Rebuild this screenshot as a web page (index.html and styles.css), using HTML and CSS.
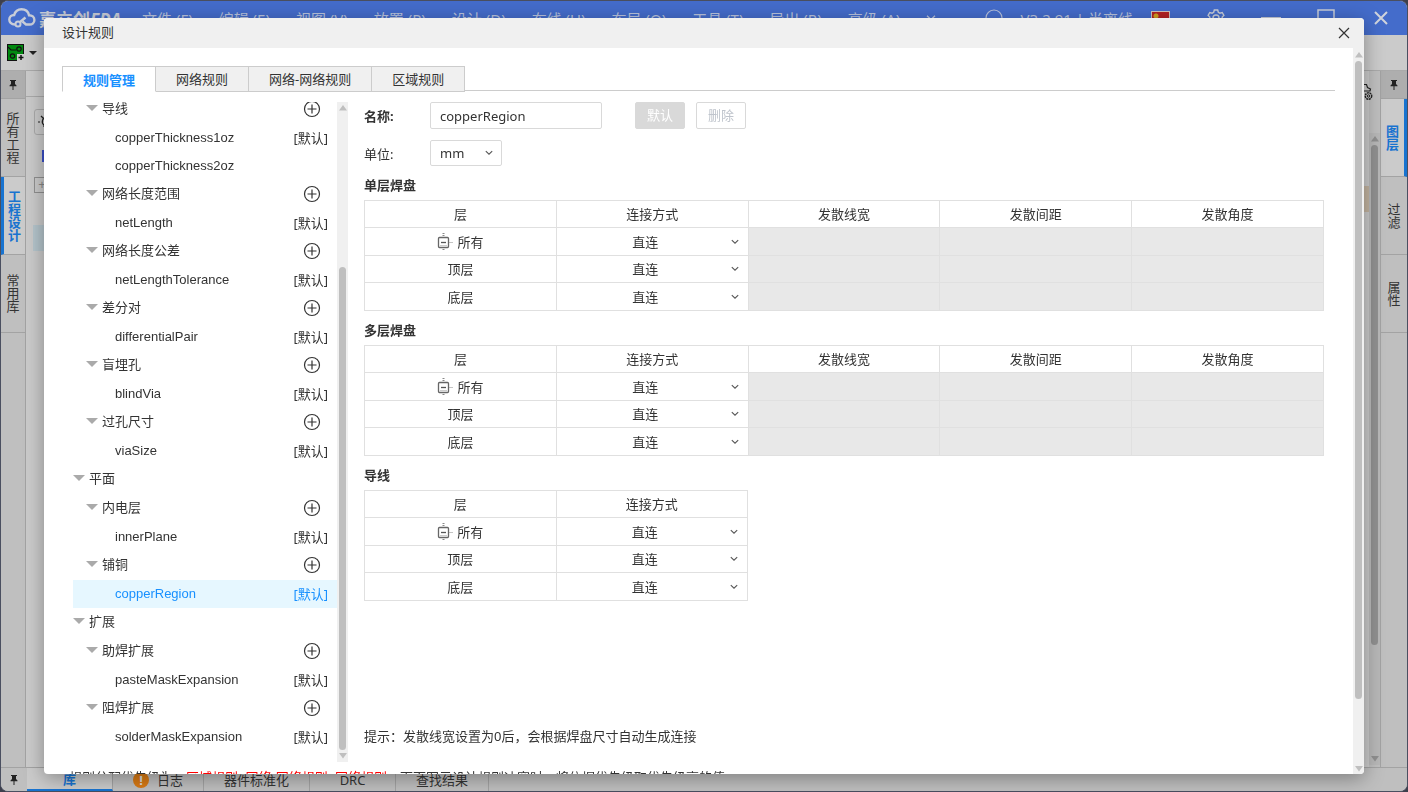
FILE: index.html
```html
<!DOCTYPE html>
<html lang="zh-CN">
<head>
  <meta charset="UTF-8">
  <meta name="viewport" content="width=device-width, initial-scale=1.0">
  <title>设计规则</title>
  <link rel="stylesheet" href="styles.css">
</head>
<body>
  <!-- shared icons -->
  <svg class="icon-defs" aria-hidden="true">
    <symbol id="chevron" viewBox="0 0 8 8">
      <path d="M0.8 2.200 L4 5.200 L7.200 2.200" fill="none" stroke="currentColor" stroke-width="1.100"/>
    </symbol>
    <symbol id="pin" viewBox="0 0 8 10">
      <path d="M1 0h6v1h-1v3l1.500 1.500v.8H4.500V10h-1V6.300H.5v-.8L2 4V1H1z" fill="#222"/>
    </symbol>
    <symbol id="plus" viewBox="0 0 18 18">
      <circle cx="9" cy="9" r="7.500" fill="none" stroke="#333" stroke-width="1.200"/>
      <path d="M4.500 9h9M9 4.500v9" stroke="#333" stroke-width="1.200"/>
    </symbol>
    <symbol id="expand" viewBox="0 0 16 18">
      <rect x="1.500" y="4.500" width="10" height="10" rx="1" fill="none" stroke="#666" stroke-width="1.300"/>
      <path d="M4 9.500h5" stroke="#555" stroke-width="1.300"/>
      <path d="M3 12.500h7" stroke="#ccc"/>
      <path d="M5.500 .5h2M5.500 2.500h2M5.500 16.500h2M12.500 9.500h1M14.500 9.500h1" stroke="#888"/>
    </symbol>
  </svg>

  <div class="app">
    <header class="titlebar">
      <svg class="logo" viewBox="0 0 28 20">
        <path d="M7 16.500C3 16.500 1.300 14 1.300 11.600 1.300 8.800 3.600 7 6.200 7 7.200 3.500 10 1.300 13.500 1.300c4 0 6.800 2.500 7.500 6 3 0 5.400 1.800 5.400 4.600 0 2.800-2.200 4.600-4.900 4.600h-3.500l-3.500-3" fill="none" stroke="#c8cdd8" stroke-width="2.400"/>
        <path d="M11.500 14.500l6-5" stroke="#c8cdd8" stroke-width="2.400"/>
        <circle cx="10" cy="16" r="2.500" fill="none" stroke="#c8cdd8" stroke-width="2"/>
      </svg>
      <strong class="brand">嘉立创<i>EDA</i></strong>
      <nav class="menu">
        <a href="#">文件 (F)</a>
        <a href="#">编辑 (E)</a>
        <a href="#">视图 (V)</a>
        <a href="#">放置 (P)</a>
        <a href="#">设计 (D)</a>
        <a href="#">布线 (U)</a>
        <a href="#">布局 (O)</a>
        <a href="#">工具 (T)</a>
        <a href="#">导出 (R)</a>
        <a href="#">高级 (A)</a>
        <svg width="10" height="10"><use href="#chevron"/></svg>
      </nav>
      <svg class="ring" viewBox="0 0 18 18"><circle cx="9" cy="9" r="8" fill="none" stroke="#b9c3dd" stroke-width="1.200"/></svg>
      <span class="version">V3.2.91 | 半离线</span>
      <span class="flag"></span>
      <svg class="gear" viewBox="0 0 18 18">
        <path d="M7.300 1h3.400l.6 2.300 1.600.9 2.300-.7 1.700 2.900-1.700 1.700v1.800l1.700 1.700-1.700 2.900-2.300-.7-1.600.9-.6 2.300H7.300l-.6-2.300-1.600-.9-2.300.7-1.700-2.900 1.700-1.700V8.100L1.100 6.400l1.700-2.900 2.300.7 1.600-.9z" fill="none" stroke="#c8cdd8" stroke-width="1.400"/>
        <circle cx="9" cy="9" r="3" fill="none" stroke="#c8cdd8" stroke-width="1.400"/>
      </svg>
      <button class="win-btn" aria-label="最小化"><svg viewBox="0 0 20 20"><path d="M0 10h20" stroke="#c8cdd8" stroke-width="2"/></svg></button>
      <button class="win-btn" aria-label="最大化"><svg viewBox="0 0 20 20"><rect x="2" y="2" width="16" height="16" fill="none" stroke="#c8cdd8" stroke-width="1.500"/></svg></button>
      <button class="win-btn" aria-label="关闭窗口"><svg viewBox="0 0 20 20"><path d="M4 4l12 12M16 4L4 16" stroke="#d0d4dc" stroke-width="2"/></svg></button>
    </header>

    <div class="toolbar">
      <svg width="18" height="18" viewBox="0 0 18 18">
        <rect x=".5" y=".5" width="16" height="16" fill="#008a10" stroke="#111"/>
        <path d="M1 3l3 3h5" fill="none" stroke="#111" stroke-width="1.200"/>
        <circle cx="12" cy="5" r="2.200" fill="none" stroke="#111" stroke-width="1.200"/>
        <circle cx="5.500" cy="12" r="2.200" fill="none" stroke="#111" stroke-width="1.200"/>
        <path d="M10 10h8v8h-8z" fill="#cbcbcb"/>
        <path d="M11.500 13.500h5M14 11v5" stroke="#111" stroke-width="1.500"/>
      </svg>
      <svg width="8" height="4" viewBox="0 0 8 4"><path d="M0 0h8L4 4z" fill="#222"/></svg>
    </div>

    <div class="workspace">
      <aside class="side side-left">
        <div class="side-pin"><svg width="8" height="10"><use href="#pin"/></svg></div>
        <a class="side-tab" href="#">所有工程</a>
        <a class="side-tab active" href="#">工程设计</a>
        <a class="side-tab" href="#">常用库</a>
      </aside>
      <div class="panel">
        <div class="panel-head"></div>
        <div class="panel-tool">
          <svg width="18" height="18" viewBox="0 0 18 18"><path d="M9 4a4.500 4.500 0 0 0-3 8v2M0 9h2M3 3l2 2" fill="none" stroke="#222" stroke-width="1.200"/></svg>
        </div>
        <div class="panel-mark"></div>
        <div class="panel-node">+</div>
        <div class="panel-row"></div>
      </div>
      <div class="canvas"></div>
      <div class="layers">
        <svg class="cloud-gear" viewBox="0 0 12 18">
          <path d="M0 1.500h2.500l1 3 3 1.500-.5 2H0" fill="none" stroke="#222" stroke-width="1.200"/>
          <circle cx="4.500" cy="13" r="3.200" fill="none" stroke="#222" stroke-width="1.400" stroke-dasharray="2 .6"/>
          <circle cx="4.500" cy="13" r="1.200" fill="none" stroke="#222"/>
        </svg>
        <div class="layer-row"></div>
      </div>
      <div class="scroll scroll-dim">
        <svg viewBox="0 0 8 6"><path d="M4 0l4 5.500H0z"/></svg>
        <i></i>
        <svg viewBox="0 0 8 6"><path d="M0 0h8L4 5.500z"/></svg>
      </div>
      <aside class="side side-right">
        <div class="side-pin"><svg width="8" height="10"><use href="#pin"/></svg></div>
        <a class="side-tab active" href="#">图层</a>
        <a class="side-tab" href="#">过滤</a>
        <a class="side-tab" href="#">属性</a>
      </aside>
    </div>

    <footer class="bottombar">
      <span class="bottom-pin"><svg width="8" height="10"><use href="#pin"/></svg></span>
      <a class="bottom-tab active" href="#">库</a>
      <a class="bottom-tab" href="#"><b class="warn">!</b>日志</a>
      <a class="bottom-tab" href="#">器件标准化</a>
      <a class="bottom-tab" href="#">DRC</a>
      <a class="bottom-tab" href="#">查找结果</a>
    </footer>
  </div>

  <section class="dialog" role="dialog" aria-labelledby="dialogTitle">
    <header class="dialog-head">
      <h1 id="dialogTitle">设计规则</h1>
      <button class="close" aria-label="关闭"><svg width="12" height="12" viewBox="0 0 12 12"><path d="M1 1l10 10M11 1L1 11" stroke="#333" stroke-width="1.200"/></svg></button>
    </header>

    <div class="dialog-main">
      <div class="dialog-body">
        <nav class="tabs">
          <button class="tab active">规则管理</button>
          <button class="tab">网络规则</button>
          <button class="tab">网络-网络规则</button>
          <button class="tab">区域规则</button>
        </nav>

        <div class="columns">
          <div class="tree-wrap">
            <ul class="tree">
              <li class="group"><span>导线</span><button aria-label="新增导线"><svg><use href="#plus"/></svg></button></li>
              <li class="leaf"><a href="#">copperThickness1oz</a><em>[默认]</em></li>
              <li class="leaf"><a href="#">copperThickness2oz</a></li>
              <li class="group"><span>网络长度范围</span><button aria-label="新增网络长度范围"><svg><use href="#plus"/></svg></button></li>
              <li class="leaf"><a href="#">netLength</a><em>[默认]</em></li>
              <li class="group"><span>网络长度公差</span><button aria-label="新增网络长度公差"><svg><use href="#plus"/></svg></button></li>
              <li class="leaf"><a href="#">netLengthTolerance</a><em>[默认]</em></li>
              <li class="group"><span>差分对</span><button aria-label="新增差分对"><svg><use href="#plus"/></svg></button></li>
              <li class="leaf"><a href="#">differentialPair</a><em>[默认]</em></li>
              <li class="group"><span>盲埋孔</span><button aria-label="新增盲埋孔"><svg><use href="#plus"/></svg></button></li>
              <li class="leaf"><a href="#">blindVia</a><em>[默认]</em></li>
              <li class="group"><span>过孔尺寸</span><button aria-label="新增过孔尺寸"><svg><use href="#plus"/></svg></button></li>
              <li class="leaf"><a href="#">viaSize</a><em>[默认]</em></li>
              <li class="group root"><span>平面</span></li>
              <li class="group"><span>内电层</span><button aria-label="新增内电层"><svg><use href="#plus"/></svg></button></li>
              <li class="leaf"><a href="#">innerPlane</a><em>[默认]</em></li>
              <li class="group"><span>铺铜</span><button aria-label="新增铺铜"><svg><use href="#plus"/></svg></button></li>
              <li class="leaf selected"><a href="#">copperRegion</a><em>[默认]</em></li>
              <li class="group root"><span>扩展</span></li>
              <li class="group"><span>助焊扩展</span><button aria-label="新增助焊扩展"><svg><use href="#plus"/></svg></button></li>
              <li class="leaf"><a href="#">pasteMaskExpansion</a><em>[默认]</em></li>
              <li class="group"><span>阻焊扩展</span><button aria-label="新增阻焊扩展"><svg><use href="#plus"/></svg></button></li>
              <li class="leaf"><a href="#">solderMaskExpansion</a><em>[默认]</em></li>
            </ul>
            <div class="scroll scroll-tree">
              <svg viewBox="0 0 8 6"><path d="M4 0l4 5.500H0z"/></svg>
              <i></i>
              <svg viewBox="0 0 8 6"><path d="M0 0h8L4 5.500z"/></svg>
            </div>
          </div>

          <form class="rule">
            <div class="field">
              <label class="strong" for="ruleName">名称:</label>
              <input id="ruleName" type="text" value="copperRegion">
              <button class="btn btn-fill" type="button" disabled>默认</button>
              <button class="btn" type="button" disabled>删除</button>
            </div>
            <div class="field field-unit">
              <label for="ruleUnit">单位:</label>
              <div class="picker unit">
                <select id="ruleUnit"><option>mm</option><option>mil</option></select>
                <svg><use href="#chevron"/></svg>
              </div>
            </div>

            <h2>单层焊盘</h2>
            <table>
              <thead>
                <tr><th>层</th><th>连接方式</th><th>发散线宽</th><th>发散间距</th><th>发散角度</th></tr>
              </thead>
              <tbody>
                <tr>
                  <td><div class="all"><svg><use href="#expand"/></svg>所有</div></td>
                  <td><div class="picker"><select aria-label="单层焊盘 所有"><option>直连</option></select><svg><use href="#chevron"/></svg></div></td>
                  <td class="off"></td><td class="off"></td><td class="off"></td>
                </tr>
                <tr>
                  <td>顶层</td>
                  <td><div class="picker"><select aria-label="单层焊盘 顶层"><option>直连</option></select><svg><use href="#chevron"/></svg></div></td>
                  <td class="off"></td><td class="off"></td><td class="off"></td>
                </tr>
                <tr>
                  <td>底层</td>
                  <td><div class="picker"><select aria-label="单层焊盘 底层"><option>直连</option></select><svg><use href="#chevron"/></svg></div></td>
                  <td class="off"></td><td class="off"></td><td class="off"></td>
                </tr>
              </tbody>
            </table>

            <h2>多层焊盘</h2>
            <table>
              <thead>
                <tr><th>层</th><th>连接方式</th><th>发散线宽</th><th>发散间距</th><th>发散角度</th></tr>
              </thead>
              <tbody>
                <tr>
                  <td><div class="all"><svg><use href="#expand"/></svg>所有</div></td>
                  <td><div class="picker"><select aria-label="多层焊盘 所有"><option>直连</option></select><svg><use href="#chevron"/></svg></div></td>
                  <td class="off"></td><td class="off"></td><td class="off"></td>
                </tr>
                <tr>
                  <td>顶层</td>
                  <td><div class="picker"><select aria-label="多层焊盘 顶层"><option>直连</option></select><svg><use href="#chevron"/></svg></div></td>
                  <td class="off"></td><td class="off"></td><td class="off"></td>
                </tr>
                <tr>
                  <td>底层</td>
                  <td><div class="picker"><select aria-label="多层焊盘 底层"><option>直连</option></select><svg><use href="#chevron"/></svg></div></td>
                  <td class="off"></td><td class="off"></td><td class="off"></td>
                </tr>
              </tbody>
            </table>

            <h2>导线</h2>
            <table class="narrow">
              <thead>
                <tr><th>层</th><th>连接方式</th></tr>
              </thead>
              <tbody>
                <tr>
                  <td><div class="all"><svg><use href="#expand"/></svg>所有</div></td>
                  <td><div class="picker"><select aria-label="导线 所有"><option>直连</option></select><svg><use href="#chevron"/></svg></div></td>
                </tr>
                <tr>
                  <td>顶层</td>
                  <td><div class="picker"><select aria-label="导线 顶层"><option>直连</option></select><svg><use href="#chevron"/></svg></div></td>
                </tr>
                <tr>
                  <td>底层</td>
                  <td><div class="picker"><select aria-label="导线 底层"><option>直连</option></select><svg><use href="#chevron"/></svg></div></td>
                </tr>
              </tbody>
            </table>

            <p class="tip">提示：发散线宽设置为0后，会根据焊盘尺寸自动生成连接</p>
          </form>
        </div>

        <p class="priority">规则分配优先级为：<mark>区域规则&gt;网络-网络规则&gt;网络规则</mark>，下面图示设计规则冲突时，将依据优先级取优先级高的值</p>
      </div>
      <div class="scroll scroll-dialog">
        <svg viewBox="0 0 8 6"><path d="M4 0l4 5.500H0z"/></svg>
        <i></i>
        <svg viewBox="0 0 8 6"><path d="M0 0h8L4 5.500z"/></svg>
      </div>
    </div>
  </section>
</body>
</html>
```

FILE: styles.css
```css
* {
  margin: 0;
  padding: 0;
  box-sizing: border-box;
}

html, body {
  height: 100%;
  overflow: hidden;
}

body {
  font-family: "Noto Sans", "Noto Sans CJK SC", sans-serif;
  font-size: 13px;
  color: #333;
  background: #3d3f4c;
}

a {
  color: inherit;
  text-decoration: none;
}

button, input, select {
  font: inherit;
  color: inherit;
  background: none;
  border: 0;
}

.icon-defs {
  display: none;
}

/* Main window behind the dialog */
.app {
  height: 100%;
  display: flex;
  flex-direction: column;
  border: 1px solid #4a4f60;
  border-radius: 8px;
  overflow: hidden;
  background: #bfbfbf;
}

.titlebar {
  display: flex;
  align-items: center;
  flex: none;
  height: 34px;
  padding: 0 16px 0 7px;
  background: #446ccb;
  color: #b9c3dd;
  font-size: 15px;
}

.logo {
  width: 28px;
  height: 20px;
}

.brand {
  width: 90px;
  margin-left: 3px;
  font-size: 17px;
  white-space: nowrap;
  color: #c8cdd8;
}

.menu {
  display: flex;
  align-items: center;
  gap: 26px;
  flex: 1;
  margin-left: 13px;
  white-space: nowrap;
}

.ring {
  width: 18px;
  height: 18px;
}

.version {
  margin: 0 18px;
  white-space: nowrap;
}

.flag {
  width: 19px;
  height: 14px;
  border: 1px solid #d0c0b8;
  background: radial-gradient(circle at 4px 4px, #d0a020 2px, #b32222 3px);
}

.gear {
  width: 18px;
  height: 18px;
  margin: 0 36px 0 37px;
}

.win-btn {
  width: 20px;
  height: 20px;
}

.win-btn + .win-btn {
  margin-left: 35px;
}

.win-btn svg {
  display: block;
}

.toolbar {
  display: flex;
  align-items: center;
  gap: 4px;
  flex: none;
  height: 36px;
  padding-left: 6px;
  background: #cbcbcb;
  border-bottom: 1px solid #aaa;
}

.workspace {
  display: flex;
  flex: 1;
  min-height: 0;
}

.side {
  flex: none;
  background: #bfbfbf;
}

.side-left {
  width: 25px;
  border-right: 1px solid #a3a3a3;
}

.side-right {
  width: 27px;
  border-left: 1px solid #a3a3a3;
}

.side-pin {
  display: flex;
  align-items: center;
  justify-content: center;
  height: 28px;
  background: #aeaeae;
  border-bottom: 1px solid #a3a3a3;
}

.side-tab {
  display: flex;
  align-items: center;
  justify-content: center;
  width: 100%;
  height: 78px;
  writing-mode: vertical-rl;
  border-bottom: 1px solid #a3a3a3;
}

.side-tab.active {
  color: #1873d0;
  font-weight: bold;
  background: #cbcbcb;
}

.side-left .active {
  border-left: 3px solid #1873d0;
}

.side-right .active {
  border-right: 3px solid #1873d0;
}

.panel {
  width: 120px;
  background: #cbcbcb;
}

.panel-head {
  height: 26px;
  border-bottom: 1px solid #aaa;
}

.panel-tool {
  display: flex;
  align-items: center;
  height: 26px;
  margin: 12px 8px 15px;
  padding-left: 3px;
  border: 1px solid #aaa;
  border-radius: 3px;
}

.panel-mark {
  height: 12px;
  margin-left: 16px;
  background: #3a50c8;
}

.panel-node {
  width: 16px;
  height: 16px;
  margin: 15px 8px 32px;
  border: 1px solid #909090;
  color: #888;
  line-height: 13px;
  text-align: center;
}

.panel-row {
  height: 26px;
  margin-left: 7px;
  background: #b5c5cc;
}

.canvas {
  flex: 1;
}

.layers {
  width: 60px;
  background: #cbcbcb;
}

.cloud-gear {
  display: block;
  width: 12px;
  height: 18px;
  margin: 12px 0 0 55px;
}

.layer-row {
  height: 26px;
  margin-top: 85px;
  background: #c4b5a2;
}

.bottombar {
  display: flex;
  flex: none;
  height: 24px;
  background: #bfbfbf;
  border-top: 1px solid #a3a3a3;
}

.bottom-pin {
  display: flex;
  align-items: center;
  justify-content: center;
  width: 26px;
}

.bottom-tab {
  display: flex;
  align-items: center;
  justify-content: center;
  gap: 8px;
  min-width: 86px;
  padding: 0 20px;
  border-right: 1px solid #a3a3a3;
}

.bottom-tab.active {
  color: #1873d0;
  font-weight: bold;
  background: #cbcbcb;
  border-bottom: 2px solid #1873d0;
}

.warn {
  width: 16px;
  height: 16px;
  border-radius: 50%;
  background: #d97a14;
  color: #ddd;
  line-height: 16px;
  text-align: center;
}

/* Scrollbars */
.scroll {
  display: grid;
  justify-items: center;
  align-items: center;
  flex: none;
  width: 11px;
  background: #f0f0f0;
}

.scroll svg {
  width: 8px;
  height: 6px;
  fill: #bfbfbf;
}

.scroll i {
  width: 7px;
  height: 100%;
  border-radius: 4px;
  background: #bfbfbf;
}

.scroll-dialog {
  grid-template-rows: 13px 638fr 64fr 11px;
}

.scroll-tree {
  grid-template-rows: 12px 153fr 482fr 12px;
}

.scroll-tree i {
  grid-row: 3;
}

.scroll-dialog svg:last-child,
.scroll-tree svg:last-child,
.scroll-dim svg:last-child {
  grid-row: 4;
}

.scroll-dim {
  grid-template-rows: 12px 502fr 108fr 12px;
  margin: 62px 0 2px;
  background: #b8b8b8;
}

.scroll-dim svg {
  fill: #909090;
}

.scroll-dim i {
  background: #909090;
}

/* Dialog */
.dialog {
  position: fixed;
  inset: 18px 44px;
  display: flex;
  flex-direction: column;
  overflow: hidden;
  border-radius: 4px;
  background: #fff;
  box-shadow: 0 4px 20px rgba(0, 0, 0, 0.35);
}

.dialog-head {
  display: flex;
  align-items: center;
  justify-content: space-between;
  flex: none;
  height: 30px;
  padding: 0 14px 0 18px;
  background: #f0f0f0;
}

.dialog-head h1 {
  padding-bottom: 4px;
  font-size: 13px;
  font-weight: normal;
}

.close {
  display: flex;
}

.dialog-main {
  display: flex;
  flex: 1;
  min-height: 0;
}

.dialog-body {
  display: flex;
  flex-direction: column;
  flex: 1;
  min-width: 0;
  padding: 18px 18px 0;
}

.tabs {
  display: flex;
  flex: none;
  height: 25px;
  border-bottom: 1px solid #ccc;
}

.tab {
  height: 26px;
  padding: 0 20px 2px;
  background: #f0f0f0;
  border: 1px solid #ccc;
  border-left: 0;
}

.tab.active {
  padding-bottom: 0;
  border-left: 1px solid #ccc;
  border-bottom-color: #fff;
  background: #fff;
  color: #1890ff;
  font-weight: bold;
}

.columns {
  display: flex;
  flex: 1;
  gap: 16px;
  min-height: 0;
  margin: 11px 0 4px;
}

.tree-wrap {
  display: flex;
  width: 286px;
  overflow: hidden;
}

.tree {
  flex: 1;
  margin-top: -7px;
  padding-left: 11px;
  list-style: none;
}

.tree li {
  display: flex;
  align-items: center;
  justify-content: space-between;
  height: 28px;
}

.tree .group {
  margin-bottom: 1px;
  padding: 0 16px 0 13px;
}

.tree .root {
  padding-left: 0;
}

.group span {
  display: flex;
  align-items: center;
  gap: 4px;
  padding-bottom: 4px;
}

.group span::before {
  content: "";
  margin-top: 2px;
  border: 6px solid transparent;
  border-top-color: #aaa;
  border-bottom: 0;
}

.group button,
.group svg {
  display: block;
  width: 18px;
  height: 18px;
}

.leaf {
  padding: 0 9px 0 42px;
}

.leaf a {
  padding-bottom: 2px;
  font-family: "Liberation Sans", sans-serif;
}

.leaf em {
  padding-bottom: 1px;
  font-style: normal;
}

.tree .selected {
  color: #1890ff;
  background: #e6f7ff;
}

.rule {
  display: flex;
  flex-direction: column;
  flex: 1;
  min-width: 0;
  padding-right: 11px;
}

.field {
  display: flex;
  align-items: center;
  height: 27px;
}

.field label {
  width: 66px;
}

.field .strong {
  font-weight: bold;
}

.field input {
  width: 172px;
  height: 27px;
  margin-right: 33px;
  padding: 0 9px;
  border: 1px solid #d9d9d9;
  border-radius: 2px;
}

.field-unit {
  height: 26px;
  margin: 11px 0 1px;
}

.btn {
  height: 27px;
  margin-right: 11px;
  padding: 0 11px 2px;
  border: 1px solid #d9d9d9;
  border-radius: 2px;
  color: #bfc4cc;
}

.btn-fill {
  background: #d9d9d9;
  color: #fff;
}

/* select with its arrow stacked in one grid cell */
.picker {
  display: grid;
  align-items: center;
}

.picker select {
  grid-area: 1 / 1;
  width: 100%;
  height: 26px;
  padding-right: 14px;
  appearance: none;
  text-align: center;
  text-align-last: center;
}

.picker svg {
  grid-area: 1 / 1;
  justify-self: end;
  width: 8px;
  height: 8px;
  margin-right: 9px;
  color: #555;
  pointer-events: none;
}

.unit {
  width: 72px;
}

.picker.unit select {
  padding: 0 9px;
  border: 1px solid #d9d9d9;
  border-radius: 2px;
  text-align: left;
  text-align-last: left;
}

.rule h2 {
  padding: 6px 0 2px;
  font-size: 13px;
  line-height: 26px;
}

.rule .field-unit + h2 {
  line-height: 25px;
}

table {
  width: 100%;
  table-layout: fixed;
  border-collapse: collapse;
}

table.narrow {
  width: 40%;
}

th, td {
  border: 1px solid #e0e0e0;
  font-weight: normal;
  text-align: center;
  line-height: 20px;
}

th {
  height: 27px;
}

td {
  height: 28px;
}

tbody tr:nth-child(even) td {
  height: 27px;
}

.off {
  background: #e8e8e8;
}

.all {
  display: flex;
  align-items: center;
  justify-content: center;
  gap: 4px;
}

.all svg {
  width: 16px;
  height: 18px;
}

.tip {
  margin-top: auto;
  padding-bottom: 16px;
  line-height: 20px;
}

.priority {
  height: 8px;
  padding-left: 7px;
  line-height: 22px;
  white-space: nowrap;
}

.priority mark {
  color: #f00;
  background: none;
}
```
